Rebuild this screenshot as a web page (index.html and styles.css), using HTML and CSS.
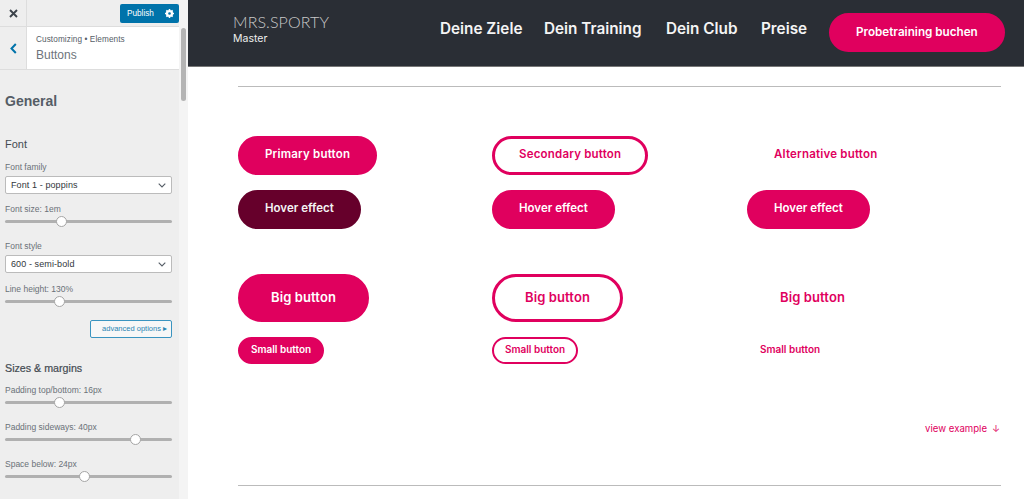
FILE: index.html
```html
<!DOCTYPE html>
<html lang="en">
<head>
    <meta charset="UTF-8">
    <meta name="viewport" content="width=device-width, initial-scale=1.0">
    <title>Customizing Buttons</title>
    <link rel="stylesheet" href="styles.css">
</head>
<body>
    <aside class="sidebar">
        <div class="topbar">
            <div class="close-box">
                <svg width="9" height="9" viewBox="0 0 9 9"><path d="M1 1l7 7M8 1L1 8" stroke="#3c434a" stroke-width="1.9"/></svg>
            </div>
            <div class="publish">
                <span>Publish</span>
                <svg width="9" height="9" viewBox="0 0 20 20"><circle cx="10" cy="10" r="5.5" fill="none" stroke="#fff" stroke-width="5"/><path d="M10 0v20M0 10h20M3 3l14 14M17 3L3 17" stroke="#fff" stroke-width="3.4" stroke-dasharray="4 12 4 0"/></svg>
            </div>
        </div>
        <div class="section-head">
            <div class="back">
                <svg width="7" height="11" viewBox="0 0 7 11"><path d="M5.8 1L1.5 5.5l4.3 4.5" fill="none" stroke="#0073aa" stroke-width="2"/></svg>
            </div>
            <div class="crumbs">
                <div class="crumb">Customizing • Elements</div>
                <div class="crumb-title">Buttons</div>
            </div>
        </div>
        <div class="panel">
            <h2 class="panel-title">General</h2>

            <h3 class="group-title">Font</h3>
            <label class="field-label family-label">Font family</label>
            <div class="select">Font 1 - poppins <svg width="8" height="5" viewBox="0 0 8 5"><path d="M.7.7L4 4l3.3-3.3" fill="none" stroke="#555d66" stroke-width="1.1"/></svg></div>
            <label class="field-label size-label">Font size: 1em</label>
            <div class="slider"><span class="thumb" style="left: 34.3%"></span></div>
            <label class="field-label style-label">Font style</label>
            <div class="select">600 - semi-bold <svg width="8" height="5" viewBox="0 0 8 5"><path d="M.7.7L4 4l3.3-3.3" fill="none" stroke="#555d66" stroke-width="1.1"/></svg></div>
            <label class="field-label height-label">Line height: 130%</label>
            <div class="slider"><span class="thumb" style="left: 33.1%"></span></div>
            <div class="advanced-row"><div class="advanced">advanced options ▸</div></div>

            <h3 class="group-title sizes-title">Sizes &amp; margins</h3>
            <label class="field-label pad-label">Padding top/bottom: 16px</label>
            <div class="slider"><span class="thumb" style="left: 33.1%"></span></div>
            <label class="field-label pad-label next">Padding sideways: 40px</label>
            <div class="slider"><span class="thumb" style="left: 78.3%"></span></div>
            <label class="field-label pad-label next">Space below: 24px</label>
            <div class="slider"><span class="thumb" style="left: 48.2%"></span></div>
        </div>
        <div class="scrollbar"><div class="scroll-thumb"></div></div>
    </aside>

    <main class="main">
        <header class="site-header">
            <div class="logo">
                <div class="logo-name">MRS.SPORTY</div>
                <div class="logo-sub">Master</div>
            </div>
            <nav class="nav">
                <a>Deine Ziele</a>
                <a>Dein Training</a>
                <a>Dein Club</a>
                <a>Preise</a>
            </nav>
            <a class="btn primary cta">Probetraining buchen</a>
        </header>

        <div class="content">
            <hr class="rule">
            <div class="btn-grid">
                <div><a class="btn primary wide">Primary button</a></div>
                <div><a class="btn secondary wide">Secondary button</a></div>
                <div><a class="btn alt wide">Alternative button</a></div>

                <div><a class="btn dark">Hover effect</a></div>
                <div><a class="btn primary">Hover effect</a></div>
                <div><a class="btn primary">Hover effect</a></div>
            </div>
            <div class="btn-grid sized">
                <div><a class="btn big primary">Big button</a></div>
                <div><a class="btn big secondary">Big button</a></div>
                <div><a class="btn big alt">Big button</a></div>

                <div><a class="btn small primary">Small button</a></div>
                <div><a class="btn small secondary">Small button</a></div>
                <div><a class="btn small alt">Small button</a></div>
            </div>
            <div class="example-link"><a>view example</a><span class="arrow">↓</span></div>
            <hr class="rule bottom">
        </div>
    </main>
</body>
</html>
```

FILE: styles.css
```css
html, body {
    height: 499px;
    overflow: hidden;
}
body {
    margin: 0;
    display: flex;
    background: #fff;
    font-family: 'Liberation Sans', Arial, sans-serif;
}

/* customizer sidebar */
.sidebar {
    width: 188px;
    height: 499px;
    flex: none;
    position: relative;
    background: #eee;
    overflow: hidden;
}
.topbar {
    height: 26px;
    display: flex;
    justify-content: space-between;
    border-bottom: 1px solid #ddd;
    width: 179px;
}
.close-box {
    width: 26px;
    display: flex;
    align-items: center;
    justify-content: center;
    border-right: 1px solid #ddd;
}
.publish {
    width: 47px;
    height: 19px;
    margin-top: 4px;
    background: #0073aa;
    border-radius: 2px;
    color: #fff;
    font-size: 8.2px;
    display: flex;
    align-items: center;
    justify-content: space-between;
    padding: 0 5px 0 7px;
}
.section-head {
    width: 179px;
    height: 42px;
    display: flex;
    background: #fff;
    border-bottom: 1px solid #ddd;
}
.back {
    width: 26px;
    flex: none;
    background: #eee;
    border-right: 1px solid #ddd;
    display: flex;
    align-items: center;
    justify-content: center;
}
.crumbs {
    padding: 7px 0 0 9px;
    color: #555d66;
}
.crumb {
    font-size: 8.2px;
    line-height: 11px;
    letter-spacing: 0.1px;
}
.crumb-title {
    font-size: 12px;
    line-height: 16px;
    margin-top: 2px;
    color: #6d747b;
}
.panel {
    width: 179px;
    box-sizing: border-box;
    padding: 0 7px 0 5px;
}
.panel-title {
    margin: 22px 0 0;
    font-size: 14px;
    line-height: 18px;
    color: #555d66;
}
.group-title {
    margin: 27px 0 0;
    font-size: 11px;
    line-height: 14px;
    font-weight: normal;
    color: #444b52;
}
.sizes-title {
    margin-top: 23px;
    font-size: 10.7px;
    -webkit-text-stroke: 0.2px #444b52;
}
.field-label {
    display: block;
    font-size: 8.5px;
    line-height: 11px;
    color: #6a7178;
}
.family-label {
    margin-top: 11px;
}
.size-label {
    margin-top: 10px;
}
.height-label {
    margin-top: 11px;
}
.style-label {
    margin-top: 18px;
}
.pad-label {
    margin-top: 10px;
}
.pad-label.next {
    margin-top: 18px;
}
.select {
    height: 18px;
    margin-top: 3px;
    box-sizing: border-box;
    border: 1px solid #bbb;
    border-radius: 2px;
    background: #fff;
    padding: 0 5px;
    font-size: 9px;
    letter-spacing: 0.1px;
    color: #32373c;
    display: flex;
    align-items: center;
    justify-content: space-between;
}
.slider {
    height: 3px;
    margin-top: 5px;
    background: #b0b0b0;
    border-radius: 2px;
    position: relative;
}
.thumb {
    position: absolute;
    top: -4px;
    margin-left: -6px;
    width: 11px;
    height: 11px;
    box-sizing: border-box;
    border: 1px solid #a5a5a5;
    border-radius: 50%;
    background: #fff;
}
.advanced-row {
    display: flex;
    justify-content: flex-end;
    margin-top: 17px;
}
.advanced {
    width: 82px;
    height: 18px;
    box-sizing: border-box;
    border: 1px solid #3a94c0;
    border-radius: 2px;
    background: #f7f7f7;
    color: #2a86b4;
    font-size: 7.5px;
    line-height: 16px;
    text-align: right;
    padding-right: 4px;
}
.scrollbar {
    position: absolute;
    top: 0;
    right: 0;
    width: 9px;
    height: 499px;
    background: #f4f4f4;
}
.scroll-thumb {
    width: 5px;
    height: 73px;
    margin: 28px 0 0 2px;
    background: #b4b4b4;
    border-radius: 3px;
}

/* preview */
.main {
    flex: 1;
    font-family: Inter, 'Noto Sans', sans-serif;
}
.site-header {
    height: 67px;
    box-sizing: border-box;
    background: #2a2e35;
    border-bottom: 1px solid #777;
    display: flex;
    align-items: flex-start;
    padding-left: 45px;
}
.logo {
    width: 207px;
    padding-top: 13px;
    color: #c8c8c8;
}
.logo-name {
    font-family: Lato, sans-serif;
    font-weight: 300;
    font-size: 16px;
    line-height: 18px;
    letter-spacing: 0.1px;
}
.logo-sub {
    font-size: 10.5px;
    line-height: 14px;
    margin-top: 0.5px;
    color: #eee;
}
.nav {
    display: grid;
    grid-template-columns: 104px 122px 95px 68px;
    padding-top: 19px;
    color: #f4f4f4;
    font-size: 15.3px;
    line-height: 20px;
    font-weight: 600;
}
.btn {
    display: inline-block;
    box-sizing: border-box;
    padding: 0 25px;
    height: 39px;
    line-height: 33px;
    font-size: 11.5px;
    font-weight: 600;
    border: 2px solid #e0005e;
    border-radius: 20px;
    white-space: nowrap;
}
.wide {
    letter-spacing: 0.2px;
}
.cta {
    margin-top: 13px;
    font-size: 11.7px;
    line-height: 34px;
}
.primary {
    background: #e0005e;
    color: #fff;
}
.secondary {
    color: #e0005e;
    border-width: 3px;
    padding: 0 24px;
    line-height: 31px;
}
.alt {
    color: #e0005e;
    border-color: transparent;
}
.dark {
    background: #66002b;
    border-color: #66002b;
    color: #f4f4f4;
}
.big {
    height: 48px;
    line-height: 42px;
    padding: 0 31px;
    font-size: 13px;
    letter-spacing: 0.1px;
    border-radius: 24px;
}
.big.secondary {
    padding: 0 30px;
    line-height: 40px;
}
.small {
    height: 27px;
    line-height: 21px;
    padding: 0 11px;
    font-size: 10px;
    border-radius: 14px;
}
.small.secondary {
    border-width: 2px;
    padding: 0 11px;
    line-height: 21px;
}
.content {
    padding: 19px 23px 0 50px;
}
.rule {
    margin: 0;
    border: 0;
    border-top: 1px solid #bbb;
}
.rule.bottom {
    margin-top: 49px;
}
.btn-grid {
    display: grid;
    grid-template-columns: 254px 255px 1fr;
    row-gap: 15px;
    margin-top: 49px;
}
.btn-grid.sized {
    margin-top: 45px;
}
.example-link {
    margin-top: 58px;
    display: flex;
    justify-content: flex-end;
    gap: 5px;
    color: #e0005e;
    font-size: 9.6px;
    line-height: 14px;
}
.arrow {
    margin-right: 1px;
}
```
